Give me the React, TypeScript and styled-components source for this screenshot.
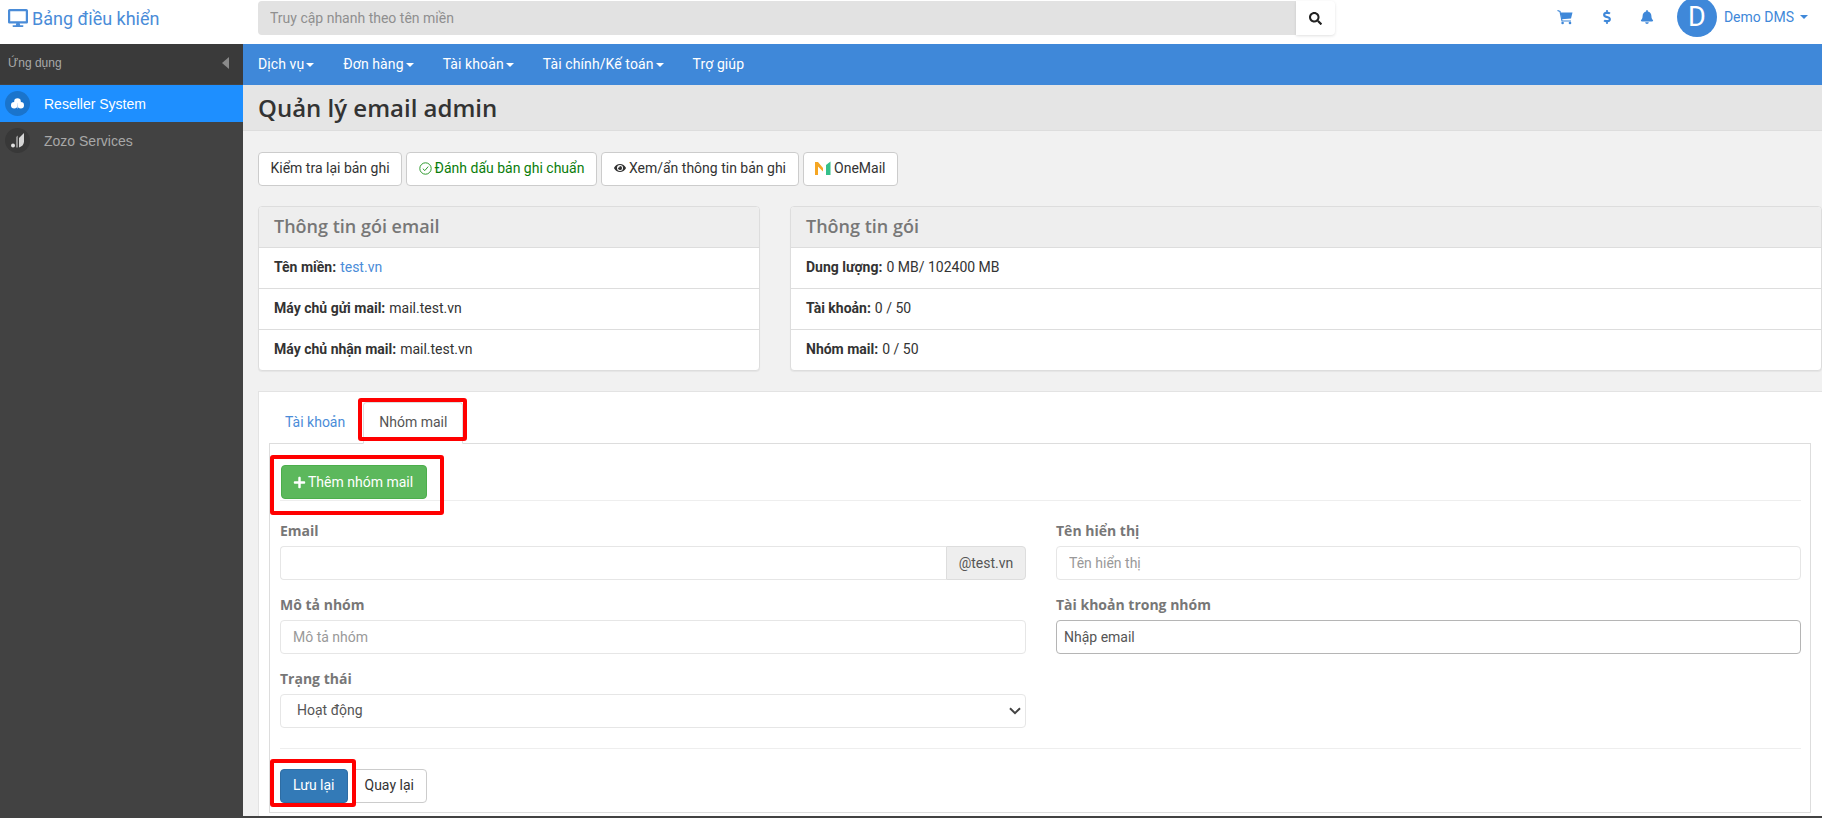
import React from 'react'
import styled, { createGlobalStyle } from 'styled-components'
import { FaBell, FaDesktop, FaDollarSign, FaEye, FaPlus, FaSearch } from 'react-icons/fa'

const chevron =
  "data:image/svg+xml,%3Csvg xmlns='http://www.w3.org/2000/svg' width='12' height='8' viewBox='0 0 12 8'%3E%3Cpath d='M1 1.2 L6 6.2 L11 1.2' fill='none' stroke='%23444' stroke-width='2'/%3E%3C/svg%3E"

const GlobalStyle = createGlobalStyle`
  html, body {
    margin: 0;
    padding: 0;
    height: 818px;
    overflow: hidden;
    background: #424242;
    font-family: Roboto, "Liberation Sans", sans-serif;
    font-size: 14px;
    color: #333;
  }
  * { box-sizing: border-box; }
`

const Page = styled.div`
  width: 1822px;
  height: 818px;
  display: flex;
  flex-direction: column;
  overflow: hidden;
`

const TopBar = styled.header`
  height: 44px;
  flex: none;
  background: #fff;
  display: flex;
  align-items: flex-start;
  overflow: hidden;
`

const Brand = styled.a`
  width: 258px;
  flex: none;
  height: 36px;
  padding-left: 8px;
  display: flex;
  align-items: center;
  gap: 4px;
  color: #4a8cd8;
  font-size: 18px;
  svg { font-size: 20px; }
`

const SearchBox = styled.div`
  width: 1077px;
  flex: none;
  margin-top: 1px;
  display: flex;
  height: 34px;
`

const SearchInput = styled.input`
  flex: 1;
  border: 0;
  outline: 0;
  padding: 0 12px;
  background: #e2e2e2;
  border-radius: 4px 0 0 4px;
  font: 14px Roboto, sans-serif;
  &::placeholder { color: #8f8f8f; }
`

const SearchButton = styled.button`
  width: 39px;
  border: 0;
  background: #fff;
  border-radius: 0 4px 4px 0;
  box-shadow: 0 1px 3px rgba(0, 0, 0, 0.12);
  color: #222;
  font-size: 13px;
  display: flex;
  align-items: center;
  justify-content: center;
`

const UserArea = styled.div`
  margin-left: auto;
  padding-right: 14px;
  height: 34px;
  display: flex;
  align-items: center;
  color: #3f88d9;
`

const TopIcon = styled.span<{ $w: number }>`
  width: ${p => p.$w}px;
  display: flex;
  justify-content: center;
  font-size: 14px;
`

const Avatar = styled.span`
  width: 40px;
  height: 40px;
  margin: 0 7px 0 10px;
  border-radius: 50%;
  flex: none;
  background: #3f88d9;
  color: #fff;
  font-size: 27px;
  display: flex;
  align-items: center;
  justify-content: center;
`

const Caret = styled.i<{ $gap?: number }>`
  display: inline-block;
  margin-left: ${p => p.$gap ?? 2}px;
  vertical-align: middle;
  border-top: 4px solid currentColor;
  border-left: 4px solid transparent;
  border-right: 4px solid transparent;
`

const Body = styled.div`
  flex: 1;
  min-height: 0;
  display: flex;
`

const Sidebar = styled.aside`
  width: 243px;
  flex: none;
  background: #424242;
  font-family: "Liberation Sans", Arial, sans-serif;
`

const SidebarHead = styled.div`
  height: 40px;
  background: #3a3a3a;
  color: #a9a9a9;
  font-size: 12px;
  padding: 0 20px 2px 8px;
  display: flex;
  align-items: center;
  justify-content: space-between;
`

const CollapseArrow = styled.i`
  border-right: 7px solid #8a8a8a;
  border-top: 6px solid transparent;
  border-bottom: 6px solid transparent;
  margin-right: -6px;
`

const SideItem = styled.a<{ $active?: boolean }>`
  height: 37px;
  margin-top: ${p => (p.$active ? '1px' : '0')};
  display: flex;
  align-items: center;
  padding-left: 5px;
  gap: 14px;
  font-size: 14px;
  background: ${p => (p.$active ? '#1e8fff' : 'transparent')};
  color: ${p => (p.$active ? '#fff' : '#a8a8a8')};
`

const SideIcon = styled.span<{ $active?: boolean }>`
  width: 25px;
  height: 25px;
  border-radius: 50%;
  background: ${p => (p.$active ? '#1a74cc' : '#383838')};
  display: flex;
  align-items: center;
  justify-content: center;
`

const Main = styled.main`
  flex: 1;
  min-width: 0;
  height: 772px;
  max-height: 772px;
  margin-bottom: 2px;
  display: flex;
  flex-direction: column;
  background: #f1f1f1;
`

const NavBar = styled.nav`
  height: 41px;
  flex: none;
  background: #3f88d9;
  padding: 0 0 2px 15px;
  display: flex;
  align-items: center;
  gap: 29px;
  color: #fff;
`

const NavItem = styled.a`
  font-size: 14px;
  letter-spacing: 0.1px;
`

const TitleBar = styled.div`
  height: 46px;
  flex: none;
  background: #e5e5e5;
  border-bottom: 1px solid #ddd;
  padding-left: 15px;
  display: flex;
  align-items: center;
`

const Title = styled.h1`
  margin: 0;
  font: 600 24px "Open Sans", sans-serif;
  color: #333;
`

const Content = styled.div`
  flex: 1;
  min-height: 0;
  padding: 21px 0 0 15px;
  overflow: hidden;
  display: flex;
  flex-direction: column;
`

const Toolbar = styled.div`
  display: flex;
  gap: 4px;
`

const ToolButton = styled.button<{ $green?: boolean }>`
  height: 34px;
  padding: 0 11.5px 2px;
  background: #fff;
  border: 1px solid #ccc;
  border-radius: 4px;
  font: 14px Roboto, sans-serif;
  color: ${p => (p.$green ? '#0a7d0a' : '#333')};
  display: flex;
  align-items: center;
  gap: 3px;
`

const EyeButton = styled(ToolButton)`
  padding-left: 12px;
  padding-right: 12px;
  svg { font-size: 12px; }
`

const LogoButton = styled(ToolButton)`
  padding-left: 11px;
  gap: 3px;
`

const PanelGrid = styled.div`
  margin-top: 20px;
  display: grid;
  grid-template-columns: 502px 1fr;
  gap: 30px;
`

const Panel = styled.section`
  background: #fff;
  border: 1px solid #ddd;
  border-radius: 4px;
  box-shadow: 0 1px 1px rgba(0, 0, 0, 0.05);
  overflow: hidden;
`

const PanelHead = styled.h3`
  margin: 0;
  height: 40px;
  padding: 0 15px 2px;
  display: flex;
  align-items: center;
  background: #eee;
  font: 600 18px "Open Sans", sans-serif;
  color: #777;
`

const PanelRow = styled.div`
  height: 41px;
  padding: 0 15px 2px;
  display: flex;
  align-items: center;
  gap: 4px;
  border-top: 1px solid #ddd;
  font-size: 14px;
  white-space: pre;
  b { font-weight: 700; color: #333; }
  a { color: #4a8cd8; }
`

const Card = styled.section`
  margin-top: 20px;
  flex: 1;
  min-height: 0;
  background: #fff;
  border: 1px solid #e3e3e3;
  border-right: 0;
  border-bottom: 0;
  padding: 10px 11px 0 10px;
`

const Tabs = styled.div`
  height: 42px;
  display: flex;
  gap: 2px;
  margin-bottom: -1px;
`

const Tab = styled.a<{ $active?: boolean }>`
  position: relative;
  height: 42px;
  padding: 0 15px 2px;
  display: flex;
  align-items: center;
  font-size: 14px;
  color: ${p => (p.$active ? '#555' : '#4a8cd8')};
  background: ${p => (p.$active ? '#fff' : 'transparent')};
  border: 1px solid ${p => (p.$active ? '#ddd' : 'transparent')};
  border-bottom-color: ${p => (p.$active ? '#fff' : 'transparent')};
  border-radius: 4px 4px 0 0;
`

const TabPane = styled.div`
  border: 1px solid #ddd;
  height: 370px;
  padding: 21px 9px 0 10px;
  background: #fff;
`

const Highlight = styled.span<{ $t: number; $r: number; $b: number; $l: number }>`
  position: absolute;
  top: ${p => p.$t}px;
  right: ${p => p.$r}px;
  bottom: ${p => p.$b}px;
  left: ${p => p.$l}px;
  border: 4px solid #f00;
  border-radius: 3px;
  pointer-events: none;
`

const AddButton = styled.button`
  position: relative;
  display: flex;
  align-items: center;
  gap: 2px;
  height: 34px;
  margin-left: 1px;
  padding: 0 13px 0 11px;
  background: #5cb85c;
  border: 1px solid #4cae4c;
  border-radius: 4px;
  color: #fff;
  font: 14px Roboto, sans-serif;
  svg { font-size: 13px; }
`

const Divider = styled.hr`
  border: 0;
  border-top: 1px solid #eee;
  margin: 1px 0 20px;
`

const FormGrid = styled.div`
  display: grid;
  grid-template-columns: 746px 745px;
  column-gap: 30px;
  row-gap: 15px;
`

const Field = styled.div`
  display: flex;
  flex-direction: column;
`

const Label = styled.label`
  height: 20px;
  margin-bottom: 5px;
  font: 700 14px/20px "Open Sans", sans-serif;
  color: #777;
`

const Input = styled.input<{ $strong?: boolean }>`
  width: 100%;
  height: 34px;
  padding: 0 ${p => (p.$strong ? '7px' : '12px')} 1px;
  background: #fff;
  border: 1px solid ${p => (p.$strong ? '#b5b5b5' : '#e6e6e6')};
  border-radius: 4px;
  outline: 0;
  font: 14px Roboto, sans-serif;
  color: #555;
  &::placeholder { color: ${p => (p.$strong ? '#555' : '#999')}; }
`

const InputGroup = styled.div`
  display: flex;
  ${Input} {
    flex: 1;
    border-radius: 4px 0 0 4px;
    border-right: 0;
  }
`

const Addon = styled.span`
  width: 80px;
  flex: none;
  padding-bottom: 1px;
  background: #eee;
  border: 1px solid #ddd;
  border-radius: 0 4px 4px 0;
  color: #555;
  font-size: 14px;
  display: flex;
  align-items: center;
  justify-content: center;
`

const Select = styled.select`
  height: 34px;
  width: 100%;
  padding: 0 24px 2px 16px;
  appearance: none;
  background: #fff url("${chevron}") no-repeat right 4px center;
  border: 1px solid #e6e6e6;
  border-radius: 4px;
  outline: 0;
  font: 14px Roboto, sans-serif;
  color: #555;
`

const Actions = styled.div`
  border-top: 1px solid #eee;
  margin-top: 20px;
  padding-top: 20px;
  display: flex;
  gap: 4px;
`

const SaveButton = styled.button`
  position: relative;
  height: 34px;
  padding: 0 12px 2px;
  background: #337ab7;
  border: 1px solid #2e6da4;
  border-radius: 4px;
  color: #fff;
  font: 14px Roboto, sans-serif;
`

const BackButton = styled.button`
  height: 34px;
  padding: 0 12px 2px;
  background: #fff;
  border: 1px solid #ccc;
  border-radius: 4px;
  color: #333;
  font: 14px Roboto, sans-serif;
`

const CartIcon = () => (
  <svg width="16" height="15" viewBox="0 0 16 15" fill="none">
    <path d="M0.5 0.5 L3 1.5 L5 11 H14" stroke="currentColor" strokeWidth="1.2" />
    <path d="M3.6 2.5 H15.5 L14 8.6 L4.8 9.2 Z" fill="currentColor" />
    <circle cx="5.6" cy="13" r="1.3" fill="currentColor" />
    <circle cx="13" cy="13" r="1.3" fill="currentColor" />
  </svg>
)

const CloudIcon = () => (
  <svg width="13" height="11" viewBox="0 0 13 11" fill="#fff">
    <circle cx="6.5" cy="3.5" r="3.3" />
    <circle cx="3.2" cy="7.2" r="3.2" />
    <circle cx="9.8" cy="7.2" r="3.2" />
    <path d="M6.5 5 V10.5" stroke="#cfe3fa" strokeWidth="0.7" />
  </svg>
)

const ZozoIcon = () => (
  <svg width="13" height="15" viewBox="0 0 13 15">
    <circle cx="2" cy="12.5" r="2" fill="#e0e0e0" />
    <path d="M5 4 L7 2.5 V14.5 H5 Z" fill="#8d8d8d" />
    <path d="M8 14.5 V5 L13 0 V9 Q12.5 13 8 14.5 Z" fill="#d5d5d5" />
  </svg>
)

const CheckIcon = () => (
  <svg width="13" height="13" viewBox="0 0 13 13" fill="none" stroke="#2e9a2e">
    <circle cx="6.5" cy="6.5" r="5.7" />
    <path d="M3.8 6.7 L5.8 8.6 L9.2 4.6" />
  </svg>
)

const OneMailLogo = () => (
  <svg width="16" height="14" viewBox="0 0 16 14">
    <path d="M0 1 L3 1 L8 7 L8 10.5 L3 5.5 V14 H0 Z" fill="#f5a623" />
    <path d="M11 4 L15.5 0.5 V14 H11 Z" fill="#35c08a" />
  </svg>
)

const navItems = ['Dịch vụ', 'Đơn hàng', 'Tài khoản', 'Tài chính/Kế toán']

const emailRows = [
  { label: 'Máy chủ gửi mail:', value: 'mail.test.vn' },
  { label: 'Máy chủ nhận mail:', value: 'mail.test.vn' },
]

const packageRows = [
  { label: 'Dung lượng:', value: '0 MB/ 102400 MB' },
  { label: 'Tài khoản:', value: '0 / 50' },
  { label: 'Nhóm mail:', value: '0 / 50' },
]

const App: React.FC = () => (
  <Page>
    <GlobalStyle />
    <TopBar>
      <Brand>
        <FaDesktop />
        Bảng điều khiển
      </Brand>
      <SearchBox>
        <SearchInput placeholder="Truy cập nhanh theo tên miền" />
        <SearchButton><FaSearch /></SearchButton>
      </SearchBox>
      <UserArea>
        <TopIcon $w={44}><CartIcon /></TopIcon>
        <TopIcon $w={40}><FaDollarSign /></TopIcon>
        <TopIcon $w={40}><FaBell /></TopIcon>
        <Avatar>D</Avatar>
        Demo DMS
        <Caret $gap={6} />
      </UserArea>
    </TopBar>
    <Body>
      <Sidebar>
        <SidebarHead>
          Ứng dụng
          <CollapseArrow />
        </SidebarHead>
        <SideItem $active>
          <SideIcon $active><CloudIcon /></SideIcon>
          Reseller System
        </SideItem>
        <SideItem>
          <SideIcon><ZozoIcon /></SideIcon>
          Zozo Services
        </SideItem>
      </Sidebar>
      <Main>
        <NavBar>
          {navItems.map(item => (
            <NavItem key={item}>{item}<Caret /></NavItem>
          ))}
          <NavItem>Trợ giúp</NavItem>
        </NavBar>
        <TitleBar>
          <Title>Quản lý email admin</Title>
        </TitleBar>
        <Content>
          <Toolbar>
            <ToolButton>Kiểm tra lại bản ghi</ToolButton>
            <ToolButton $green><CheckIcon />Đánh dấu bản ghi chuẩn</ToolButton>
            <EyeButton><FaEye />Xem/ẩn thông tin bản ghi</EyeButton>
            <LogoButton><OneMailLogo />OneMail</LogoButton>
          </Toolbar>
          <PanelGrid>
            <Panel>
              <PanelHead>Thông tin gói email</PanelHead>
              <PanelRow><b>Tên miền:</b><a>test.vn</a></PanelRow>
              {emailRows.map(r => (
                <PanelRow key={r.label}><b>{r.label}</b>{r.value}</PanelRow>
              ))}
            </Panel>
            <Panel>
              <PanelHead>Thông tin gói</PanelHead>
              {packageRows.map(r => (
                <PanelRow key={r.label}><b>{r.label}</b>{r.value}</PanelRow>
              ))}
            </Panel>
          </PanelGrid>
          <Card>
            <Tabs>
              <Tab>Tài khoản</Tab>
              <Tab $active>
                Nhóm mail
                <Highlight $t={-5} $r={-5} $b={2} $l={-6} />
              </Tab>
            </Tabs>
            <TabPane>
              <AddButton>
                <FaPlus />
                Thêm nhóm mail
                <Highlight $t={-11} $r={-18} $b={-17} $l={-12} />
              </AddButton>
              <Divider />
              <FormGrid>
                <Field>
                  <Label>Email</Label>
                  <InputGroup>
                    <Input />
                    <Addon>@test.vn</Addon>
                  </InputGroup>
                </Field>
                <Field>
                  <Label>Tên hiển thị</Label>
                  <Input placeholder="Tên hiển thị" />
                </Field>
                <Field>
                  <Label>Mô tả nhóm</Label>
                  <Input placeholder="Mô tả nhóm" />
                </Field>
                <Field>
                  <Label>Tài khoản trong nhóm</Label>
                  <Input $strong placeholder="Nhập email" />
                </Field>
                <Field>
                  <Label>Trạng thái</Label>
                  <Select defaultValue="active">
                    <option value="active">Hoạt động</option>
                  </Select>
                </Field>
              </FormGrid>
              <Actions>
                <SaveButton>
                  Lưu lại
                  <Highlight $t={-11} $r={-9} $b={-5} $l={-11} />
                </SaveButton>
                <BackButton>Quay lại</BackButton>
              </Actions>
            </TabPane>
          </Card>
        </Content>
      </Main>
    </Body>
  </Page>
)

export default App
